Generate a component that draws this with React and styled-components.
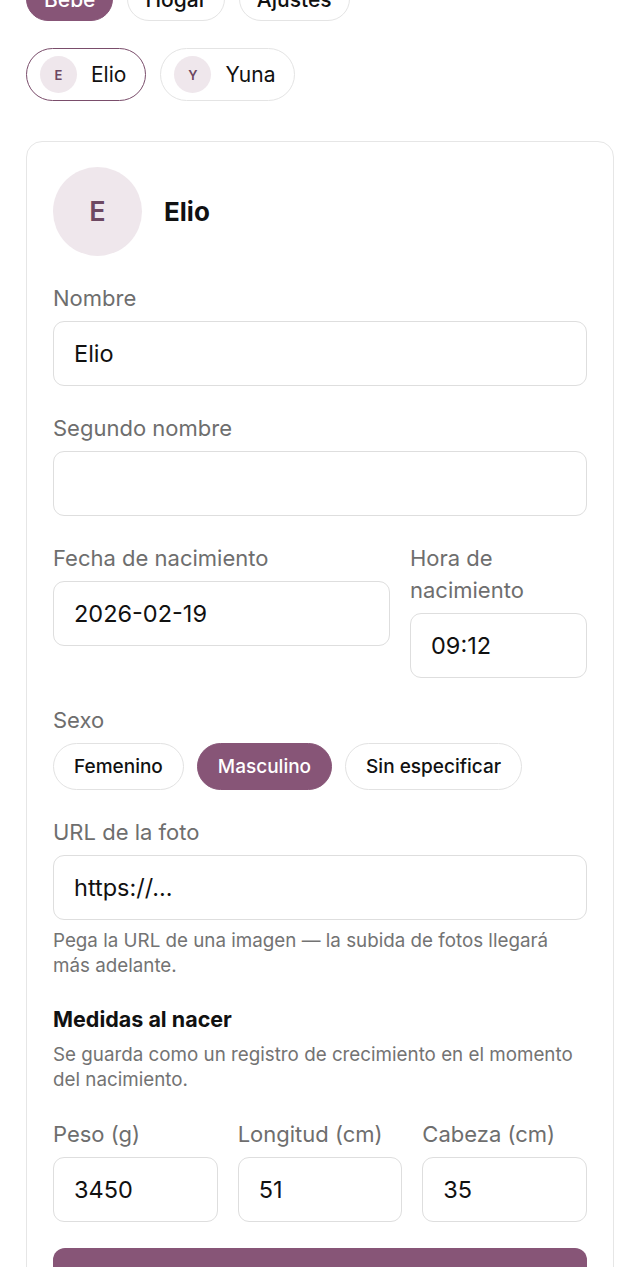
import React from "react";
import styled, { createGlobalStyle } from "styled-components";

const purple = "#875577";

const GlobalStyles = createGlobalStyle`
  html, body {
    margin: 0;
    padding: 0;
    background: #ffffff;
    font-family: Inter, "Noto Sans", sans-serif;
    color: #111;
  }
  * { box-sizing: border-box; }
`;

const Page = styled.div`
  padding: 0 26px 40px 26px;
  overflow: hidden;
`;

const Tabs = styled.div`
  display: flex;
  gap: 14px;
  margin-top: -23px;
`;

const Tab = styled.button`
  height: 44px;
  padding: 0 17px;
  border-radius: 22px;
  font: 500 21px Inter, sans-serif;
  border: 1px solid ${(p) => (p.active ? purple : "#e4e4e4")};
  background: ${(p) => (p.active ? purple : "#fff")};
  color: ${(p) => (p.active ? "#fff" : "#111")};
`;

const Chips = styled.div`
  display: flex;
  gap: 14px;
  margin-top: 27px;
`;

const Chip = styled.button`
  height: 53px;
  display: flex;
  align-items: center;
  gap: 14px;
  padding: 0 19px 0 13px;
  border-radius: 27px;
  background: #fff;
  border: ${(p) => (p.active ? `1.5px solid #7a4d6b` : "1px solid #e4e4e4")};
  font: 400 21px Inter, sans-serif;
  color: #111;
`;

const Avatar = styled.span`
  width: ${(p) => p.size}px;
  height: ${(p) => p.size}px;
  border-radius: 50%;
  background: #efe7ec;
  color: #6d4862;
  display: flex;
  align-items: center;
  justify-content: center;
  font-weight: 600;
  font-size: ${(p) => p.fs}px;
  flex-shrink: 0;
`;

const Card = styled.div`
  margin-top: 40px;
  border: 1px solid #e6e6e6;
  border-radius: 16px;
  padding: 25px 26px 40px 26px;
  display: flex;
  flex-direction: column;
  gap: 26px;
`;

const Header = styled.div`
  display: flex;
  align-items: center;
  gap: 22px;
`;

const Name = styled.div`
  font-size: 26px;
  font-weight: 700;
  color: #111;
`;

const Field = styled.div`
  display: flex;
  flex-direction: column;
`;

const Label = styled.label`
  font-size: 22px;
  line-height: 32px;
  color: #6e6e6e;
  margin-bottom: 7px;
`;

const Input = styled.div`
  height: 65px;
  border: 1px solid #dedede;
  border-radius: 11px;
  padding: 0 20px;
  display: flex;
  align-items: center;
  font-size: 23.5px;
  color: #111;
  background: #fff;
`;

const Row = styled.div`
  display: grid;
  grid-template-columns: ${(p) => p.cols};
  gap: 20px;
  align-items: start;
`;

const Pills = styled.div`
  display: flex;
  gap: 13px;
`;

const Pill = styled.button`
  height: 47px;
  padding: 0 20px;
  border-radius: 24px;
  font: 500 19px Inter, sans-serif;
  border: 1px solid ${(p) => (p.active ? purple : "#e2e2e2")};
  background: ${(p) => (p.active ? purple : "#fff")};
  color: ${(p) => (p.active ? "#fff" : "#111")};
`;

const Help = styled.p`
  margin: 8px 0 0 0;
  font-size: 18.8px;
  line-height: 25px;
  color: #737373;
`;

const Section = styled.div`
  display: flex;
  flex-direction: column;
`;

const SectionTitle = styled.h3`
  margin: 0;
  font-size: 21.5px;
  line-height: 30px;
  font-weight: 700;
  color: #111;
`;

const SaveButton = styled.button`
  height: 58px;
  border: none;
  border-radius: 12px;
  background: ${purple};
  color: #fff;
  font: 600 20px Inter, sans-serif;
`;

function App() {
  return (
    <Page>
      <GlobalStyles />
      <Tabs>
        <Tab active>Bebé</Tab>
        <Tab>Hogar</Tab>
        <Tab>Ajustes</Tab>
      </Tabs>
      <Chips>
        <Chip active>
          <Avatar size={37} fs={13}>E</Avatar>
          Elio
        </Chip>
        <Chip>
          <Avatar size={37} fs={13}>Y</Avatar>
          Yuna
        </Chip>
      </Chips>
      <Card>
        <Header>
          <Avatar size={89} fs={27}>E</Avatar>
          <Name>Elio</Name>
        </Header>
        <Field>
          <Label>Nombre</Label>
          <Input>Elio</Input>
        </Field>
        <Field>
          <Label>Segundo nombre</Label>
          <Input />
        </Field>
        <Row cols="1fr 177px">
          <Field>
            <Label>Fecha de nacimiento</Label>
            <Input>2026-02-19</Input>
          </Field>
          <Field>
            <Label>Hora de nacimiento</Label>
            <Input>09:12</Input>
          </Field>
        </Row>
        <Field>
          <Label>Sexo</Label>
          <Pills>
            <Pill>Femenino</Pill>
            <Pill active>Masculino</Pill>
            <Pill>Sin especificar</Pill>
          </Pills>
        </Field>
        <Field>
          <Label>URL de la foto</Label>
          <Input>https://...</Input>
          <Help>Pega la URL de una imagen — la subida de fotos llegará más adelante.</Help>
        </Field>
        <Section>
          <SectionTitle>Medidas al nacer</SectionTitle>
          <Help>Se guarda como un registro de crecimiento en el momento del nacimiento.</Help>
        </Section>
        <Row cols="1fr 1fr 1fr">
          <Field>
            <Label>Peso (g)</Label>
            <Input>3450</Input>
          </Field>
          <Field>
            <Label>Longitud (cm)</Label>
            <Input>51</Input>
          </Field>
          <Field>
            <Label>Cabeza (cm)</Label>
            <Input>35</Input>
          </Field>
        </Row>
        <SaveButton>Guardar</SaveButton>
      </Card>
    </Page>
  );
}

export default App;
